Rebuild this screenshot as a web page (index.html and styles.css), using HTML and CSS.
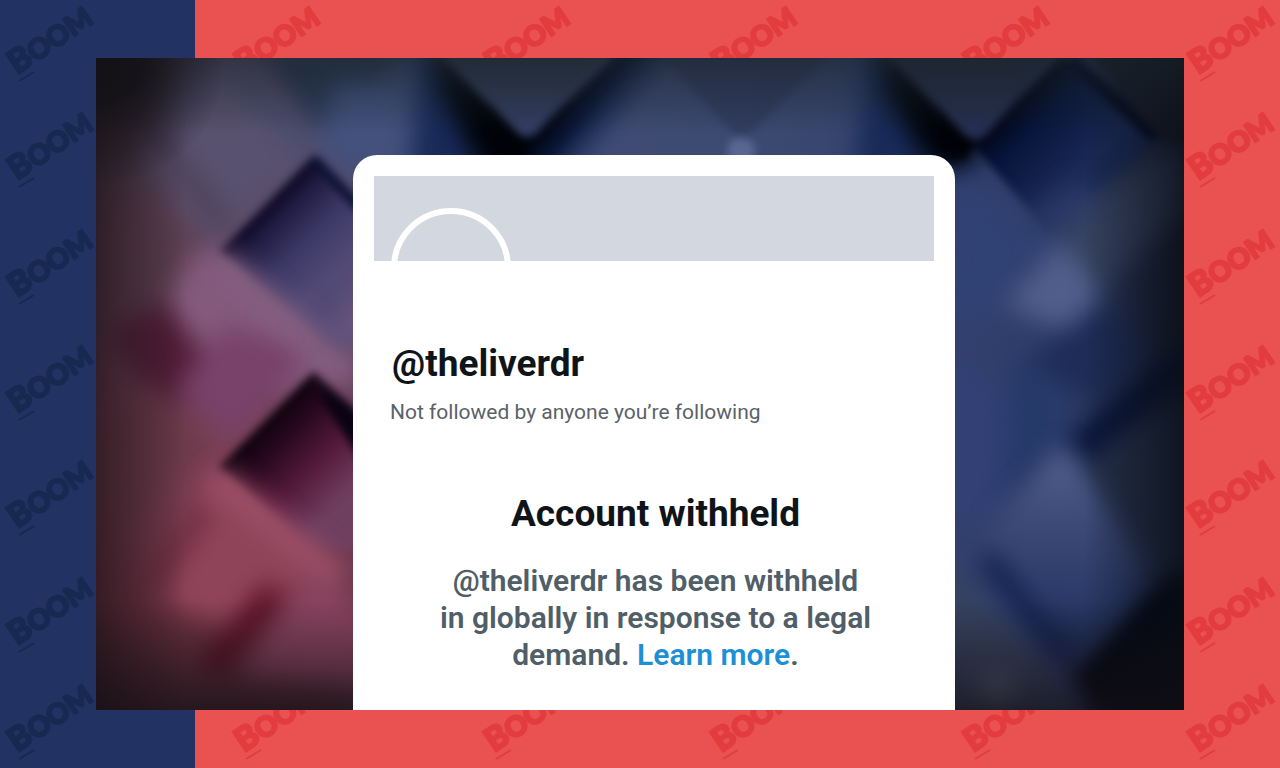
FILE: index.html
```html
<!DOCTYPE html>
<html lang="en">
<head>
<meta charset="utf-8">
<meta name="viewport" content="width=device-width, initial-scale=1">
<title>Account withheld</title>
<link rel="stylesheet" href="styles.css">
</head>
<body>
<main class="stage">
  <svg class="backdrop" viewBox="0 0 1280 768" preserveAspectRatio="xMidYMid slice" aria-hidden="true">
    <defs>
      <g id="mark">
        <text class="mark-text" transform="translate(17 75) rotate(-34)"><tspan class="mark-b">B</tspan>OOM</text>
        <path class="mark-line" d="M19 81L34 72"/>
      </g>
    </defs>
    <rect class="red" width="1280" height="768"/>
    <rect class="navy" width="195" height="768"/>
    <g class="marks-navy">
      <use href="#mark"/><use href="#mark" y="106"/><use href="#mark" y="223"/><use href="#mark" y="339"/><use href="#mark" y="454"/><use href="#mark" y="571"/><use href="#mark" y="678"/>
    </g>
    <g class="marks-red">
      <use href="#mark" x="227"/><use href="#mark" x="477"/><use href="#mark" x="704"/><use href="#mark" x="956"/>
      <use href="#mark" x="227" y="678"/><use href="#mark" x="477" y="678"/><use href="#mark" x="704" y="678"/><use href="#mark" x="956" y="678"/>
      <use href="#mark" x="1181"/><use href="#mark" x="1181" y="106"/><use href="#mark" x="1181" y="223"/><use href="#mark" x="1181" y="339"/><use href="#mark" x="1181" y="454"/><use href="#mark" x="1181" y="571"/><use href="#mark" x="1181" y="678"/>
    </g>
  </svg>

  <section class="panel">
    <svg class="art" viewBox="96 58 1088 652" preserveAspectRatio="xMidYMid slice" aria-hidden="true">
      <defs>
        <linearGradient id="base" gradientUnits="userSpaceOnUse" x1="96" y1="0" x2="1184" y2="0">
          <stop offset="0" stop-color="#4c3a4a"/><stop offset=".13" stop-color="#5f4c68"/><stop offset=".28" stop-color="#434d78"/><stop offset=".6" stop-color="#3c4970"/><stop offset=".88" stop-color="#2e3d6c"/><stop offset="1" stop-color="#1b2336"/>
        </linearGradient>
        <linearGradient id="warm" x1="0" y1="0" x2="0" y2="1">
          <stop offset=".15" stop-color="#74485f" stop-opacity="0"/><stop offset=".6" stop-color="#7f3f54" stop-opacity=".9"/><stop offset=".85" stop-color="#703243"/><stop offset="1" stop-color="#562a37"/>
        </linearGradient>
        <linearGradient id="warmFade" x1="0" y1="0" x2="1" y2="0">
          <stop offset=".5" stop-color="#fff"/><stop offset="1" stop-color="#000"/>
        </linearGradient>
        <mask id="warmMask"><rect x="96" y="58" width="450" height="652" fill="url(#warmFade)"/></mask>
        <linearGradient id="d1" gradientUnits="userSpaceOnUse" x1="267" y1="203" x2="335" y2="271">
          <stop offset="0" stop-color="#0b0722"/><stop offset=".2" stop-color="#1f1a40"/><stop offset=".55" stop-color="#3b3764"/><stop offset="1" stop-color="#524a76"/>
        </linearGradient>
        <linearGradient id="d2" gradientUnits="userSpaceOnUse" x1="267" y1="420" x2="345" y2="498">
          <stop offset="0" stop-color="#0d020f"/><stop offset=".25" stop-color="#2a0820"/><stop offset=".6" stop-color="#541a3b"/><stop offset="1" stop-color="#6f3f60"/>
        </linearGradient>
        <linearGradient id="topR" gradientUnits="userSpaceOnUse" x1="565" y1="98" x2="615" y2="140">
          <stop offset="0" stop-color="#00030d"/><stop offset=".4" stop-color="#0a1738"/><stop offset="1" stop-color="#1c2d5c" stop-opacity="0"/>
        </linearGradient>
        <linearGradient id="d3" gradientUnits="userSpaceOnUse" x1="1010" y1="100" x2="1080" y2="170">
          <stop offset="0" stop-color="#00030c"/><stop offset=".35" stop-color="#07143a"/><stop offset="1" stop-color="#1a2a56"/>
        </linearGradient>
        <linearGradient id="vee" x1="0" y1="0" x2="0" y2="1">
          <stop offset="0" stop-color="#2e3849"/><stop offset="1" stop-color="#343e66"/>
        </linearGradient>
        <linearGradient id="vee2" x1="0" y1="0" x2="0" y2="1">
          <stop offset="0" stop-color="#232d3c"/><stop offset="1" stop-color="#262f55"/>
        </linearGradient>
        <linearGradient id="glow" x1="0" y1="0" x2="0" y2="1">
          <stop offset="0" stop-color="#566490"/><stop offset=".35" stop-color="#3d4a78"/><stop offset=".7" stop-color="#2b3a69"/><stop offset="1" stop-color="#1a274c"/>
        </linearGradient>
        <linearGradient id="edgeL" x1="0" y1="0" x2="1" y2="0">
          <stop offset="0" stop-color="#1c1116" stop-opacity=".7"/><stop offset="1" stop-color="#1c1116" stop-opacity="0"/>
        </linearGradient>
        <linearGradient id="edgeR" x1="1" y1="0" x2="0" y2="0">
          <stop offset="0" stop-color="#080c14" stop-opacity=".75"/><stop offset="1" stop-color="#080c14" stop-opacity="0"/>
        </linearGradient>
        <linearGradient id="edgeB" x1="0" y1="1" x2="0" y2="0">
          <stop offset="0" stop-color="#140f14" stop-opacity=".7"/><stop offset="1" stop-color="#140f14" stop-opacity="0"/>
        </linearGradient>
        <linearGradient id="edgeT" x1="0" y1="0" x2="0" y2="1">
          <stop offset="0" stop-color="#1a2229" stop-opacity=".6"/><stop offset="1" stop-color="#1a2229" stop-opacity="0"/>
        </linearGradient>
        <radialGradient id="corner">
          <stop offset="0" stop-color="#131116"/><stop offset=".3" stop-color="#131116" stop-opacity=".9"/><stop offset="1" stop-color="#131116" stop-opacity="0"/>
        </radialGradient>
        <filter id="crisp" x="-30%" y="-30%" width="160%" height="160%" color-interpolation-filters="sRGB"><feGaussianBlur stdDeviation="4"/></filter>
        <filter id="soft" x="-50%" y="-50%" width="200%" height="200%" color-interpolation-filters="sRGB"><feGaussianBlur stdDeviation="12"/></filter>
      </defs>
      <rect x="96" y="58" width="1088" height="652" fill="url(#base)"/>
      <rect x="96" y="58" width="450" height="652" fill="url(#warm)" mask="url(#warmMask)"/>

      <!-- upper left tiles -->
      <g filter="url(#soft)">
        <path d="M180 60H250L320 150L215 245L140 150Z" fill="#58516f"/>
        <path d="M240 80L310 150" stroke="#434a6c" stroke-width="14"/>
        <path d="M145 120L225 225" stroke="#4a3d54" stroke-width="14"/>
        <path d="M260 50H410L318 130Z" fill="#293855"/>
        <path d="M335 80H430V200L318 150Z" fill="#43517c"/>
        <path d="M110 200L200 235L160 320L110 300Z" fill="#5c3f50"/>
        <path d="M200 245L360 375L250 400L160 310Z" fill="#855a7c"/>
        <path d="M110 330L165 300L215 370L200 410L140 390Z" fill="#521d38"/>
        <path d="M225 325L310 350L235 440L175 390Z" fill="#78426a"/>
        <path d="M96 420L150 380L210 445L110 560Z" fill="#6c3a4a"/>
        <path d="M215 465L320 560L240 640L150 590Z" fill="#90445a"/>
        <path d="M205 510L155 590" stroke="#6d2b41" stroke-width="16"/>
        <path d="M275 590L210 670" stroke="#590d24" stroke-width="24"/>
        <path d="M315 565L375 625V690L240 675Z" fill="#8a4460"/>
      </g>
      <g filter="url(#crisp)">
        <path d="M314 155L220 251L330 345L400 340V240Z" fill="url(#d1)"/>
        <path d="M314 159L360 208" stroke="#0b1233" stroke-width="10"/>
        <path d="M314 371L219 467L315 550H400V450Z" fill="url(#d2)"/>
        <path d="M314 375L380 430V490L325 405Z" fill="#0b0313"/>
      </g>
      <path d="M215 257L350 374" stroke="#856284" stroke-width="24" filter="url(#soft)"/>
      <path d="M214 476L340 580" stroke="#9c5069" stroke-width="26" filter="url(#soft)"/>
      <path d="M375 260L320 345L380 350Z" fill="#68547c" filter="url(#soft)"/>

      <!-- top row -->
      <g filter="url(#soft)">
        <path d="M420 40L527 130V200H410Z" fill="#182a58"/>
        <path d="M430 40L540 130L530 200L480 170L440 90Z" fill="#000309"/>
        <path d="M868 40L975 130V180H855Z" fill="#182a58"/>
        <path d="M878 40L985 130L965 175L925 160L885 90Z" fill="#000309"/>
      </g>
      <g filter="url(#crisp)">
        <path d="M485 100L527 136L550 160H500Z" fill="#000208"/>
        <path d="M935 104L975 138L965 160H945Z" fill="#000208"/>
        <path d="M620 50L527 140L530 180H680V50Z" fill="url(#topR)"/>
        <path d="M438 50H612L541 128Q527 146 513 128Z" fill="url(#vee)"/>
        <path d="M655 50H835L742 142Z" fill="#2a3455" opacity=".6"/>
        <path d="M1062 55L972 145L1050 235L1160 140Z" fill="url(#d3)"/>
        <path d="M1070 58L1158 138" stroke="#020920" stroke-width="14"/>
        <path d="M1085 50H1200V145H1165Z" fill="#191f2e"/>
        <path d="M885 50H1062L989 131Q975 148 961 131Z" fill="url(#vee2)"/>
        <circle cx="741" cy="151" r="14" fill="#596792"/>
      </g>

      <!-- right tiles -->
      <g filter="url(#soft)">
        <path d="M955 165L1050 245L980 330H940Z" fill="#304173"/>
        <path d="M1165 150L1190 150V210L1100 290L1045 235Z" fill="#364260"/>
        <path d="M1080 180L1100 200L1055 240L1030 215Z" fill="#2a3a66"/>
        <path d="M1062 240L1105 300L1075 335L1005 305Z" fill="#515e8b"/>
        <path d="M1100 300L1150 350L1100 400L1020 370Z" fill="#1e2c57"/>
        <path d="M950 340L1050 455L1000 520H940Z" fill="#324075"/>
        <path d="M1060 375L1060 455L1000 500L1010 360Z" fill="#263a6a"/>
        <path d="M1195 355L1075 452" stroke="#051035" stroke-width="26"/>
        <path d="M1150 420L1190 400V570L1150 590L1080 470Z" fill="#26314a"/>
        <path d="M1172 575L1070 675L1110 730H1210V580Z" fill="#010512"/>
      </g>
      <g filter="url(#soft)">
        <path d="M1062 444L1155 575L1080 665L970 555Z" fill="url(#glow)"/>
        <path d="M985 555L1065 660" stroke="#0e1d49" stroke-width="18"/>
        <path d="M945 560L1050 670L1080 730H930Z" fill="#36425f"/>
        <circle cx="997" cy="690" r="18" fill="#59617b"/>
      </g>
      <path d="M1170 582L1082 672L1110 730H1200V580Z" fill="#020716" opacity=".6" filter="url(#soft)"/>

      <rect x="96" y="58" width="90" height="652" fill="url(#edgeL)"/>
      <rect x="1084" y="58" width="100" height="652" fill="url(#edgeR)"/>
      <rect x="96" y="600" width="1088" height="110" fill="url(#edgeB)"/>
      <rect x="96" y="58" width="1088" height="75" fill="url(#edgeT)"/>
      <ellipse cx="105" cy="65" rx="120" ry="120" fill="url(#corner)"/>
    </svg>

    <article class="card">
      <div class="banner"><div class="avatar"></div></div>
      <header class="profile">
        <h1 class="handle">@theliverdr</h1>
        <p class="followers">Not followed by anyone you’re following</p>
      </header>
      <section class="notice">
        <h2 class="notice-title">Account withheld</h2>
        <p class="notice-text">@theliverdr has been withheld in globally in response to a legal demand. <a class="link" href="#learn-more">Learn more</a>.</p>
      </section>
    </article>
  </section>
</main>
</body>
</html>
```

FILE: styles.css
```css
* { box-sizing: border-box; }

body {
  margin: 0;
  font-family: Roboto, "Noto Sans", sans-serif;
  color: #0f1419;
}

h1, h2, p { margin: 0; }

.stage {
  position: relative;
  display: flex;
  min-height: 100vh;
  padding: 58px 96px;
  overflow: hidden;
}

.backdrop, .art {
  position: absolute;
  inset: 0;
  width: 100%;
  height: 100%;
}

.red { fill: #ea5251; }
.navy { fill: #223263; }
.mark-text { font: 900 28px Lato, sans-serif; stroke-width: 2; }
.mark-b { font-size: 33px; }
.mark-line { stroke-width: 2; }
.marks-navy { fill: #182951; stroke: #182951; }
.marks-red { fill: #e23c3e; stroke: #e23c3e; }
.marks-red .mark-line { stroke: #b92f35; }

.panel {
  position: relative;
  display: flex;
  flex: 1;
  justify-content: center;
  padding: 97px 16px 0 44px;
  overflow: hidden;
}

.card {
  position: relative;
  width: 100%;
  max-width: 602px;
  padding: 21px 21px 36px;
  border-radius: 24px 24px 0 0;
  background: #fff;
}

.banner {
  height: 85px;
  padding: 32px 17px 0;
  overflow: hidden;
  background: #d3d7df;
}

.avatar {
  width: 120px;
  height: 120px;
  border: 6px solid #fff;
  border-radius: 50%;
}

.profile { padding: 81px 16px 0; }

.handle {
  padding-left: 2px;
  font-size: 37px;
  font-weight: 700;
  line-height: 44px;
}

.followers {
  padding-top: 12px;
  color: #5a6268;
  font-size: 21px;
  line-height: 28px;
}

.notice {
  padding: 64px 60px 0 63px;
  text-align: center;
}

.notice-title {
  font-size: 37px;
  font-weight: 700;
  line-height: 48px;
}

.notice-text {
  padding-top: 24px;
  color: #505e68;
  font-size: 30px;
  font-weight: 600;
  line-height: 37px;
}

.link { color: #1d8fd6; text-decoration: none; }
```
